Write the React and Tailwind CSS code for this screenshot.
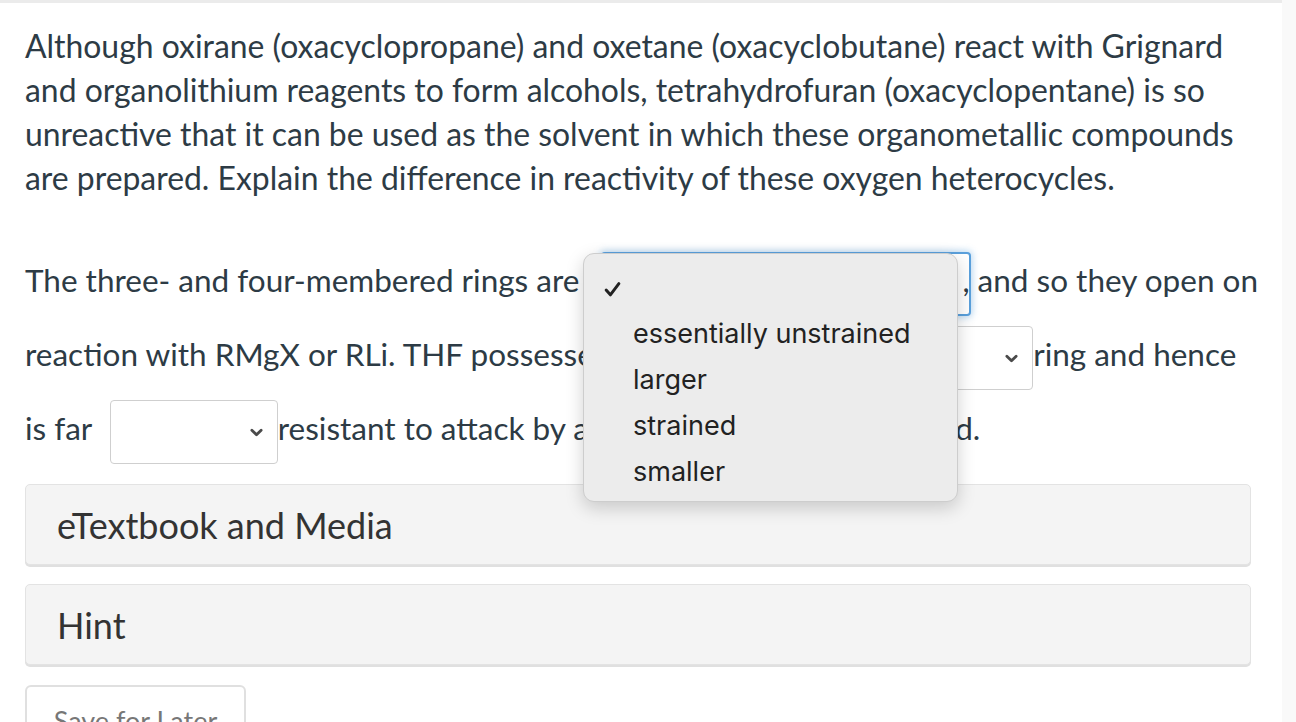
import React from "react";

function Chevron() {
  return (
    <svg viewBox="0 0 14 9" className="w-[13px] h-[9px]">
      <path d="M2 2 L7 7 L12 2" fill="none" stroke="#4a4a4a" strokeWidth="3" strokeLinecap="round" strokeLinejoin="round" />
    </svg>
  );
}

function Blank({ width, focused, gap = "ml-[10px]" }) {
  return (
    <span
      className={
        "inline-flex items-center justify-end h-[64px] align-middle rounded-[4px] bg-white pr-[14px] " +
        gap +
        " " +
        (focused
          ? "border-2 border-[#5aa0dc] shadow-[0_0_6px_2px_rgba(90,160,220,0.35)]"
          : "border border-[#cfcfcf]")
      }
      style={{ width }}
    >
      <Chevron />
    </span>
  );
}

const options = ["essentially unstrained", "larger", "strained", "smaller"];

export default function App() {
  return (
    <div className="relative w-[1296px] h-[722px] overflow-hidden bg-white flex font-['Lato',sans-serif] text-[#2d3b45]">
      <div className="w-[1282px] flex flex-col">
        <div className="h-[5px] border-b-[3px] border-[#ebebeb]" />
        <div className="px-[25px] pt-[21px]">
          <p className="text-[31.9px] leading-[44px] w-[1240px]">
            Although oxirane (oxacyclopropane) and oxetane (oxacyclobutane) react with Grignard and organolithium reagents to form alcohols, tetrahydrofuran (oxacyclopentane) is so unreactive that it can be used as the solvent in which these organometallic compounds are prepared. Explain the difference in reactivity of these oxygen heterocycles.
          </p>
          <div className="mt-[43px] text-[31.5px] leading-[74px]">
            <div className="whitespace-nowrap">
              The three- and four-membered rings are
              <Blank width={370} focused gap="ml-[22px] -mr-[9px]" />, and so they open on
            </div>
            <div className="whitespace-nowrap">
              reaction with RMgX or RLi. THF possesses a
              <Blank width={392} />ring and hence
            </div>
            <div className="whitespace-nowrap">
              is far <Blank width={168} />resistant to attack by an organometallic compound.
            </div>
          </div>
          <div className="mt-[19px] flex flex-col gap-[19px] w-[1226px]">
            <div className="h-[81px] flex items-center px-[31px] bg-[#f4f4f4] border border-[#e3e3e3] rounded-[5px] shadow-[0_2px_0_#e0e0e0] text-[36px] text-[#333]">
              eTextbook and Media
            </div>
            <div className="h-[81px] flex items-center px-[31px] bg-[#f4f4f4] border border-[#e3e3e3] rounded-[5px] shadow-[0_2px_0_#e0e0e0] text-[36px] text-[#333]">
              Hint
            </div>
          </div>
          <div className="mt-[20px] w-[221px] h-[60px] border-2 border-[#e0e0e0] rounded-[6px] bg-white flex justify-center pt-[14px] text-[27px] text-[#777]">
            Save for Later
          </div>
        </div>
      </div>
      <div className="flex-1 bg-[#f9f9f9]" />

      <div className="absolute left-[583px] top-[253px] w-[375px] h-[249px] rounded-[11px] bg-[#ececec] border border-[#cdcdcd] shadow-[0_6px_18px_rgba(0,0,0,0.18)] font-['Inter',sans-serif] text-[#222] text-[27px] pt-[13px]">
        <div className="h-[44px] flex items-center pl-[20px]">
          <svg viewBox="0 0 16 16" className="w-[17px] h-[17px]">
            <path d="M2 8.5 L6 13 L14 2.5" fill="none" stroke="#222" strokeWidth="2.8" strokeLinecap="round" strokeLinejoin="round" />
          </svg>
        </div>
        {options.map((o) => (
          <div key={o} className="h-[46px] flex items-center pl-[49px]">
            {o}
          </div>
        ))}
      </div>
    </div>
  );
}
